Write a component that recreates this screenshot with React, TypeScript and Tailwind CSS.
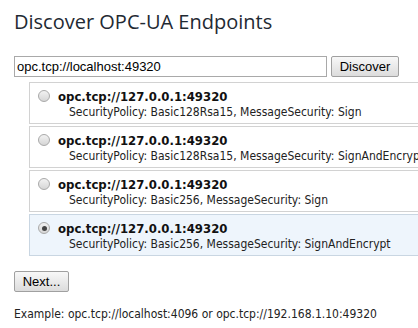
const endpoints = [
  { policy: "Basic128Rsa15", mode: "Sign" },
  { policy: "Basic128Rsa15", mode: "SignAndEncrypt" },
  { policy: "Basic256", mode: "Sign" },
  { policy: "Basic256", mode: "SignAndEncrypt" },
];

function Radio({ checked }: { checked: boolean }) {
  return (
    <span className="w-[12px] h-[12px] rounded-full border border-[#a9a9a9] bg-gradient-to-b from-[#f2f2f2] to-[#d6d6d6] flex items-center justify-center shrink-0">
      {checked && <span className="w-[5px] h-[5px] rounded-full bg-[#444]" />}
    </span>
  );
}

export default function App() {
  const selected = 3;
  return (
    <div className="w-[418px] h-[328px] overflow-hidden bg-white pl-[14px] pt-[9px] text-[#222]" style={{ fontFamily: "'DejaVu Sans Condensed', 'DejaVu Sans', sans-serif" }}>
      <h1 className="text-[20px] leading-[26px] text-[#1f2a33]" style={{ fontFamily: "'Open Sans', 'Noto Sans', sans-serif" }}>
        Discover OPC-UA Endpoints
      </h1>

      <div className="flex items-center gap-[4px] mt-[21px]" style={{ fontFamily: "'Liberation Sans', Arial, sans-serif" }}>
        <input
          className="w-[313px] h-[21px] border border-[#a9a9a9] px-[2px] text-[13px] text-[#000] outline-none"
          defaultValue="opc.tcp://localhost:49320"
        />
        <button className="h-[21px] w-[68px] border border-[#a0a0a0] rounded-[2px] bg-gradient-to-b from-[#f8f8f8] to-[#dcdcdc] text-[13px] text-[#000]">
          Discover
        </button>
      </div>

      <div className="ml-[15px] mt-[5px] w-[410px] flex flex-col gap-[2px]">
        {endpoints.map((e, i) => (
          <div
            key={i}
            className={`h-[42px] border flex items-start gap-[8px] pl-[8px] pt-[6px] ${
              i === selected ? "bg-[#eef5fc] border-[#c9d6e2]" : "bg-white border-[#d2d2d2]"
            }`}
          >
            <div className="mt-[1px]">
              <Radio checked={i === selected} />
            </div>
            <div className="whitespace-nowrap">
              <div className="text-[13px] leading-[15px] font-bold text-[#111]">opc.tcp://127.0.0.1:49320</div>
              <div className="text-[12px] leading-[16px] pl-[11px] text-[#222]">
                SecurityPolicy: {e.policy}, MessageSecurity: {e.mode}
              </div>
            </div>
          </div>
        ))}
      </div>

      <button
        className="mt-[15px] h-[21px] w-[55px] border border-[#a0a0a0] rounded-[2px] bg-gradient-to-b from-[#f8f8f8] to-[#dcdcdc] text-[13px] text-[#000]"
        style={{ fontFamily: "'Liberation Sans', Arial, sans-serif" }}
      >
        Next...
      </button>

      <p className="mt-[13px] text-[12px] leading-[16px] text-[#222]">
        Example: opc.tcp://localhost:4096 or opc.tcp://192.168.1.10:49320
      </p>
    </div>
  );
}
